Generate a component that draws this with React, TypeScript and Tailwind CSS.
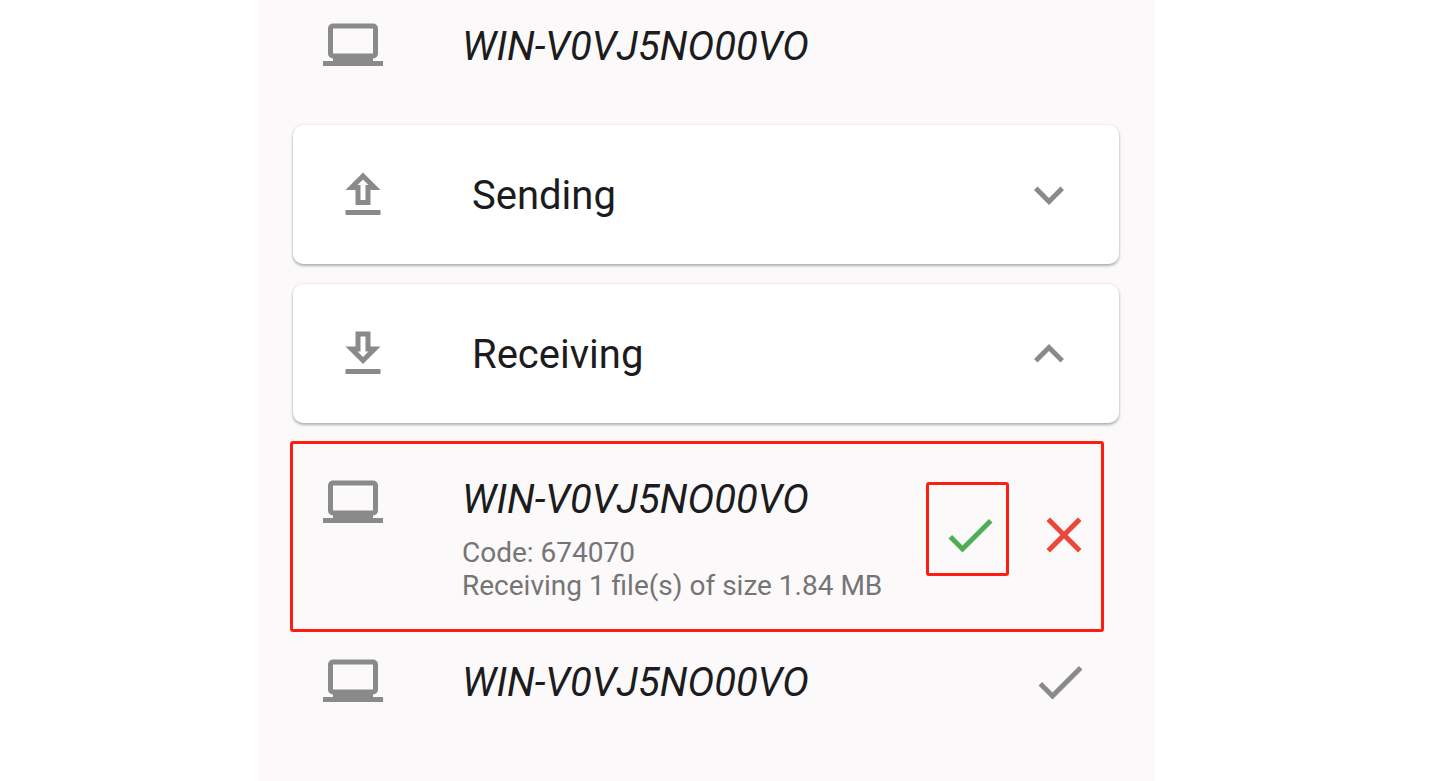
import type { ReactNode } from "react";

const icons = {
  laptop:
    "M4 3h16a2 2 0 0 1 2 2v10a2 2 0 0 1-2 2v1h4v2H0v-2h4v-1a2 2 0 0 1-2-2V5a2 2 0 0 1 2-2zM4 5v10h16V5z",
  upload: "M9 16h6v-6h4l-7-7-7 7h4v6zm3-10.17L14.17 8H13v6h-2V8H9.83L12 5.83zM5 18h14v2H5z",
  download: "M19 9h-4V3H9v6H5l7 7 7-7zm-8 2V5h2v6h1.17L12 13.17 9.83 11H11zm-6 7h14v2H5z",
  expandMore: "M16.59 8.59L12 13.17 7.41 8.59 6 10l6 6 6-6z",
  expandLess: "M12 8l-6 6 1.41 1.41L12 10.83l4.59 4.58L18 14z",
  check: "M9 16.17L4.83 12l-1.42 1.41L9 19 21 7l-1.41-1.41z",
  close:
    "M19 6.41L17.59 5 12 10.59 6.41 5 5 6.41 10.59 12 5 17.59 6.41 19 12 13.41 17.59 19 19 17.59 13.41 12z",
};

interface IconProps {
  name: keyof typeof icons;
  className?: string;
}

function Icon({ name, className = "text-[#8a8a8a]" }: IconProps) {
  return (
    <svg viewBox="0 0 24 24" className={`size-[60px] shrink-0 ${className}`} fill="currentColor" aria-hidden="true">
      <path fillRule="evenodd" d={icons[name]} />
    </svg>
  );
}

interface SectionHeaderProps {
  icon: "upload" | "download";
  title: string;
  expanded?: boolean;
}

function SectionHeader({ icon, title, expanded = false }: SectionHeaderProps) {
  return (
    <button
      type="button"
      aria-expanded={expanded}
      className="flex h-[139px] items-center gap-[79px] rounded-[10px] bg-white px-10 text-left shadow-[0_2px_3px_rgba(0,0,0,0.28),0_0_3px_rgba(0,0,0,0.1)]"
    >
      <Icon name={icon} />
      <span className="flex-1 pt-0.5 text-[40px] leading-12">{title}</span>
      <Icon name={expanded ? "expandLess" : "expandMore"} />
    </button>
  );
}

function DeviceName({ children }: { children: ReactNode }) {
  return <h2 className="pt-0.5 text-[40px] leading-12 italic">{children}</h2>;
}

export default function App() {
  return (
    <div className="min-h-screen bg-white font-[Roboto,sans-serif] text-[#1c1c1e]">
      <main className="mr-[281px] ml-[258px] min-h-screen bg-[#fbf9fa]">
        <div className="flex items-center gap-[79px] pt-4 pb-[49px] pl-[65px]">
          <Icon name="laptop" />
          <DeviceName>WIN-V0VJ5NO00VO</DeviceName>
        </div>

        <div className="flex flex-col gap-5 px-[35px]">
          <SectionHeader icon="upload" title="Sending" />
          <SectionHeader icon="download" title="Receiving" expanded />
        </div>

        <div className="mt-[18px] mr-[50px] ml-8 flex items-start rounded-[3px] border-3 border-[#ff1d12] pt-[29px] pr-[7px] pb-[27px] pl-[30px]">
          <Icon name="laptop" />
          <div className="ml-[79px] flex-1 pt-px">
            <DeviceName>WIN-V0VJ5NO00VO</DeviceName>
            <div className="mt-3 text-[28px] leading-[33px] text-[#757575]">
              <p>Code: 674070</p>
              <p>Receiving 1 file(s) of size 1.84 MB</p>
            </div>
          </div>
          <div className="mt-[9px] flex items-end gap-[25px]">
            <button
              type="button"
              aria-label="Accept"
              className="rounded-[3px] border-3 border-[#ff1d12] pt-[20px] pr-[6px] pb-[8px] pl-[11px]"
            >
              <Icon name="check" className="text-[#4fae55]" />
            </button>
            <button type="button" aria-label="Decline" className="pb-[11px]">
              <Icon name="close" className="text-[#ea4639]" />
            </button>
          </div>
        </div>

        <div className="flex items-center gap-[79px] pt-5 pr-16 pb-16 pl-[65px]">
          <Icon name="laptop" />
          <div className="flex-1">
            <DeviceName>WIN-V0VJ5NO00VO</DeviceName>
          </div>
          <Icon name="check" />
        </div>
      </main>
    </div>
  );
}
